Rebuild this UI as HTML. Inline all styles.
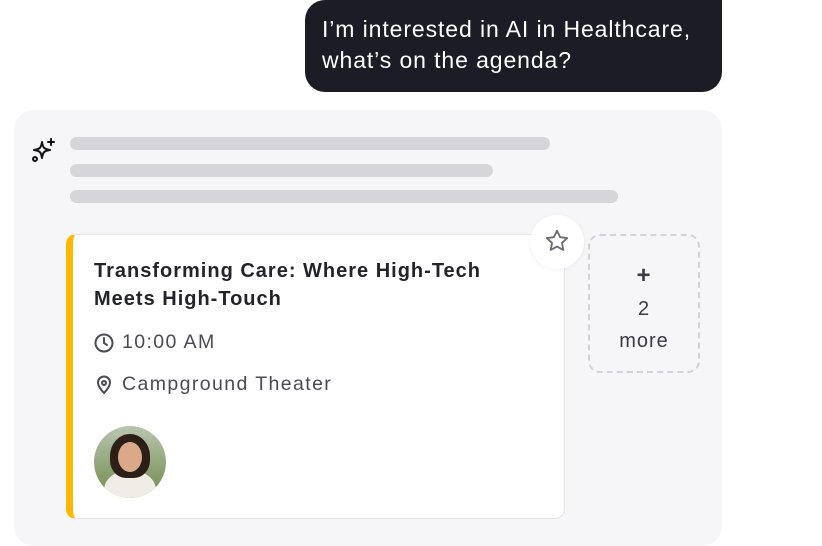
<!DOCTYPE html><html><head><style>
body{margin:0;width:822px;height:546px;background:#fff;font-family:"Liberation Sans",sans-serif;position:relative;overflow:hidden}
.q{position:absolute;left:305px;top:0;width:417px;height:92px;background:#1b1c25;border-radius:0 0 20px 20px;border-top-left-radius:20px;color:#fff;font-size:23px;line-height:31px;box-sizing:border-box;padding:14px 0 0 17px;letter-spacing:.9px;white-space:nowrap}
.box{position:absolute;left:14px;top:110px;width:708px;height:436px;background:#f6f5f8;border-radius:20px}
.bar{position:absolute;left:70px;height:13px;background:#d6d6da;border-radius:7px}
.card{position:absolute;left:66px;top:234px;width:499px;height:285px;background:#fff;border:1px solid #e4e4e8;border-left:7px solid #ffb800;border-radius:10px;box-sizing:border-box}
.t{position:absolute;left:21px;top:22px;font-size:20px;font-weight:bold;color:#23232b;line-height:28px;letter-spacing:1px;white-space:nowrap}
.r{position:absolute;left:21px;font-size:19.5px;color:#4a4a55;display:flex;align-items:center;gap:8px;letter-spacing:1.4px;white-space:nowrap}
.star{position:absolute;left:530px;top:215px;width:54px;height:54px;border-radius:50%;background:#fff;box-shadow:0 1px 4px rgba(0,0,0,.06)}
.more{position:absolute;left:588px;top:234px;width:112px;height:139px;border:2.5px dashed #cfd3dc;border-radius:12px;box-sizing:border-box;text-align:center;color:#3b3b44;font-size:20px;line-height:32px;padding-top:24px;letter-spacing:1px}
</style></head><body>
<div class="q">I’m interested in AI in Healthcare,<br>what’s on the agenda?</div>
<div class="box"></div>
<svg style="position:absolute;left:30px;top:138px" width="26" height="26" viewBox="0 0 26 26" fill="none" stroke="#111" stroke-width="2" stroke-linejoin="round" stroke-linecap="round"><path d="M12 4 C13 10 14 11 20 12 C14 13 13 14 12 20 C11 14 10 13 4 12 C10 11 11 10 12 4Z"/><path d="M21 1v6M18 4h6"/><circle cx="5" cy="21" r="2"/></svg>
<div class="bar" style="top:137px;width:480px"></div>
<div class="bar" style="top:164px;width:423px"></div>
<div class="bar" style="top:190px;width:548px"></div>
<div class="card">
<div class="t">Transforming Care: Where High-Tech<br>Meets High-Touch</div>
<div class="r" style="top:96px"><svg width="20" height="20" viewBox="0 0 20 20" fill="none" stroke="#4a4a55" stroke-width="2" stroke-linecap="round"><circle cx="10" cy="10" r="8.5"/><path d="M10 5v5l3 2"/></svg>10:00 AM</div>
<div class="r" style="top:138px"><svg width="20" height="20" viewBox="0 0 20 20" fill="none" stroke="#4a4a55" stroke-width="2"><path d="M10 18s6-6 6-10.5A6 6 0 0 0 4 7.5C4 12 10 18 10 18z"/><circle cx="10" cy="8" r="2"/></svg>Campground Theater</div>
<div style="position:absolute;left:21px;top:191px;width:72px;height:72px;border-radius:50%;overflow:hidden;background:linear-gradient(#b9c5b0,#6f8b4a)">
<div style="position:absolute;left:10px;top:44px;width:52px;height:40px;border-radius:50%;background:#f0ece6"></div>
<div style="position:absolute;left:16px;top:8px;width:40px;height:44px;border-radius:50% 50% 40% 40%;background:#2c1f18"></div>
<div style="position:absolute;left:24px;top:16px;width:24px;height:30px;border-radius:50%;background:#d9a98a"></div>
</div>
</div>
<div class="star"><svg style="position:absolute;left:14px;top:13px" width="26" height="26" viewBox="0 0 24 24" fill="none" stroke="#6b6b75" stroke-width="1.7" stroke-linejoin="round"><path d="M12 2.5l2.9 6 6.5.8-4.8 4.5 1.2 6.5L12 17.1l-5.8 3.2 1.2-6.5L2.6 9.3l6.5-.8z"/></svg></div>
<div class="more"><b style="font-size:24px">+</b><br>2<br>more</div>
</body></html>
